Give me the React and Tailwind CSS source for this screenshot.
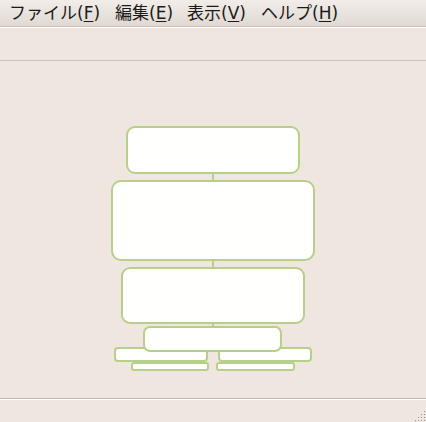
const menus = [
  { label: "ファイル", key: "F", w: "w-[106px]" },
  { label: "編集", key: "E", w: "w-[72px]" },
  { label: "表示", key: "V", w: "w-[74px]" },
  { label: "ヘルプ", key: "H", w: "w-[90px]" },
];

// diagram nodes: left, top, width, height, radius
const nodes = [
  { c: "left-[126px] top-[65px] w-[174px] h-[48px] rounded-[9px]" },
  { c: "left-[111px] top-[119px] w-[204px] h-[81px] rounded-[10px]" },
  { c: "left-[121px] top-[206px] w-[184px] h-[57px] rounded-[9px]" },
  { c: "left-[114px] top-[286px] w-[94px] h-[15px] rounded-[4px]" },
  { c: "left-[218px] top-[286px] w-[94px] h-[15px] rounded-[4px]" },
  { c: "left-[143px] top-[265px] w-[139px] h-[26px] rounded-[7px]" },
  { c: "left-[131px] top-[301px] w-[78px] h-[9px] rounded-[3px]" },
  { c: "left-[216px] top-[301px] w-[79px] h-[9px] rounded-[3px]" },
];

export default function App() {
  return (
    <div className="w-[426px] h-[422px] flex flex-col bg-[#efe6e0] overflow-hidden font-['DejaVu_Sans','Noto_Sans_CJK_JP',sans-serif]">
      <div className="h-[27px] flex items-center pl-[9px] bg-gradient-to-b from-[#f2ede9] to-[#e0d9d3] text-[17px] text-[#1a1a1a] border-b border-[#c9c1ba]">
        {menus.map((m) => (
          <span key={m.key} className={`${m.w} shrink-0 whitespace-nowrap leading-none`}>
            {m.label}(<span className="underline underline-offset-2">{m.key}</span>)
          </span>
        ))}
      </div>
      <div className="h-[34px] border-t border-white border-b border-b-[#cbc3bc]" />
      <div className="relative flex-1">
        <div className="absolute left-[212px] top-[110px] w-[2px] h-[160px] bg-[#b6d08a]" />
        {nodes.map((n, i) => (
          <div
            key={i}
            className={`absolute ${n.c} border-2 border-[#b6d08a] bg-[#fffffd]`}
          />
        ))}
      </div>
      <div className="h-[24px] border-t border-[#bdb8b3] relative">
        <div className="border-t border-white h-full" />
        <svg className="absolute right-0 bottom-0" width="12" height="12" viewBox="0 0 12 12">
          {[
            [10, 2], [10, 5], [7, 5], [10, 8], [7, 8], [4, 8], [10, 11], [7, 11], [4, 11], [1, 11],
          ].map(([x, y], i) => (
            <rect key={i} x={x} y={y - 1} width="1" height="1" fill="#9b948e" />
          ))}
        </svg>
      </div>
    </div>
  );
}
